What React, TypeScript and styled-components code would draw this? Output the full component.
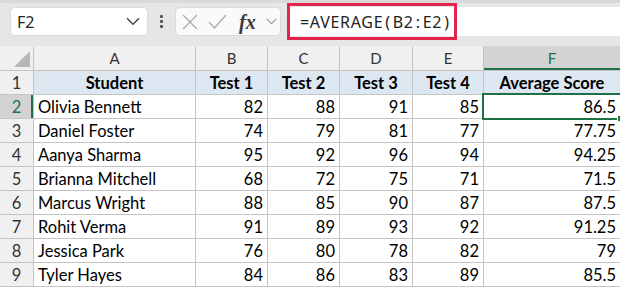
import React from "react";
import styled, { createGlobalStyle, css } from "styled-components";

const GlobalStyle = createGlobalStyle`
  html, body {
    margin: 0;
    padding: 0;
    background: #ffffff;
  }
  body {
    font-family: "Lato", "Liberation Sans", sans-serif;
  }
`;

const GREEN = "#1e7145";
const LINE = "#c4c4c4";

type Row = {
  name: string;
  scores: number[];
  avg: string;
};

const rows: Row[] = [
  { name: "Olivia Bennett", scores: [82, 88, 91, 85], avg: "86.5" },
  { name: "Daniel Foster", scores: [74, 79, 81, 77], avg: "77.75" },
  { name: "Aanya Sharma", scores: [95, 92, 96, 94], avg: "94.25" },
  { name: "Brianna Mitchell", scores: [68, 72, 75, 71], avg: "71.5" },
  { name: "Marcus Wright", scores: [88, 85, 90, 87], avg: "87.5" },
  { name: "Rohit Verma", scores: [91, 89, 93, 92], avg: "91.25" },
  { name: "Jessica Park", scores: [76, 80, 78, 82], avg: "79" },
  { name: "Tyler Hayes", scores: [84, 86, 83, 89], avg: "85.5" },
];

const columns = ["A", "B", "C", "D", "E", "F"];
const headers = ["Student", "Test 1", "Test 2", "Test 3", "Test 4", "Average Score"];

const Page = styled.div`
  width: 620px;
  height: 288px;
  overflow: hidden;
  background: #ffffff;
`;

/* ---------- formula toolbar ---------- */

const Toolbar = styled.div`
  height: 43px;
  background: #e6e6e6;
  border-top: 3px solid #d9d9d9;
  display: flex;
  align-items: center;
  padding-left: 10px;
  box-sizing: content-box;
`;

const NameBox = styled.div`
  width: 138px;
  height: 29px;
  box-sizing: border-box;
  background: #ffffff;
  border: 1px solid #dadada;
  border-radius: 5px;
  display: flex;
  align-items: center;
  justify-content: space-between;
  padding: 0 7px 0 6px;
  font-family: "Noto Sans", "Liberation Sans", sans-serif;
  font-size: 16px;
  color: #222;
  margin-top: -6px;
`;

const Grip = styled.div`
  width: 27px;
  display: flex;
  flex-direction: column;
  align-items: center;
  gap: 2px;
  margin-top: -6px;

  span {
    width: 3px;
    height: 3px;
    background: #555;
    border-radius: 1px;
  }
`;

const FormulaTools = styled.div`
  width: 106px;
  height: 29px;
  box-sizing: border-box;
  background: #fafafa;
  border: 1px solid #dadada;
  border-radius: 5px;
  display: flex;
  align-items: center;
  padding-left: 6px;
  gap: 10px;
  margin-top: -6px;
`;

const Fx = styled.span`
  font-family: "Liberation Serif", "DejaVu Serif", serif;
  font-style: italic;
  font-weight: 700;
  font-size: 20px;
  color: #3a3a3a;
  margin-left: 2px;
  line-height: 1;
`;

const FormulaBar = styled.div`
  flex: 1;
  height: 29px;
  margin-left: 6px;
  margin-top: -6px;
  background: #ffffff;
  display: flex;
  align-items: center;
`;

const Highlight = styled.div`
  width: 170px;
  height: 37px;
  box-sizing: border-box;
  border: 3px solid #e3244f;
  display: flex;
  align-items: center;
  padding-left: 10px;
  font-family: "Noto Sans", "Liberation Sans", sans-serif;
  font-size: 16px;
  letter-spacing: 0.7px;
  color: #222;
`;

const Punct = styled.span`
  margin: 0 2px;
`;

/* ---------- grid ---------- */

const Sheet = styled.div`
  display: grid;
  grid-template-columns: 33px 161px 71px 71px 72px 70px 1fr;
  grid-auto-rows: 23px;
  grid-template-rows: 24px;
  gap: 1px;
  background: ${LINE};
  border-bottom: 1px solid ${LINE};
`;

const HeaderCell = styled.div<{ $selected?: boolean }>`
  background: #f0f0f0;
  display: flex;
  align-items: center;
  justify-content: center;
  font-family: "Lato", "Liberation Sans", sans-serif;
  font-size: 15px;
  color: #333;
  position: relative;
  ${(p) =>
    p.$selected &&
    css`
      background: #d3d3d3;
      color: ${GREEN};
    `}
`;

const ColHeader = styled(HeaderCell)`
  ${(p) =>
    p.$selected &&
    css`
      box-shadow: inset 0 -2px 0 ${GREEN};
    `}
`;

const RowHeader = styled(HeaderCell)`
  font-size: 16.5px;
  ${(p) =>
    p.$selected &&
    css`
      box-shadow: inset -2px 0 0 ${GREEN};
    `}
`;

const Corner = styled(HeaderCell)`
  justify-content: flex-end;
  align-items: flex-end;
  padding: 0 3px 3px 0;

  svg {
    display: block;
  }
`;

const Cell = styled.div<{ $align?: "left" | "right" | "center"; $head?: boolean; $active?: boolean }>`
  background: ${(p) => (p.$head ? "#dde7f1" : "#ffffff")};
  display: flex;
  align-items: center;
  justify-content: ${(p) =>
    p.$align === "right" ? "flex-end" : p.$align === "center" ? "center" : "flex-start"};
  padding: 0 4px;
  font-family: "Lato", "Liberation Sans", sans-serif;
  font-size: 16.5px;
  font-weight: ${(p) => (p.$head ? 700 : 400)};
  color: #000;
  white-space: nowrap;
  overflow: visible;
  position: relative;
  ${(p) =>
    p.$active &&
    css`
      outline: 2px solid ${GREEN};
      outline-offset: 0px;
      z-index: 1;
    `}
`;

const FillHandle = styled.span`
  position: absolute;
  right: -4px;
  bottom: -4px;
  width: 5px;
  height: 5px;
  background: ${GREEN};
  border: 1px solid #fff;
`;

const Chevron = ({ size = 14, color = "#444" }: { size?: number; color?: string }) => (
  <svg width={size} height={size * 0.6} viewBox="0 0 14 8" fill="none">
    <path d="M1 1l6 6 6-6" stroke={color} strokeWidth="1.4" />
  </svg>
);

export default function App() {
  return (
    <Page>
      <GlobalStyle />
      <Toolbar>
        <NameBox>
          <span>F2</span>
          <Chevron />
        </NameBox>
        <Grip>
          <span />
          <span />
          <span />
        </Grip>
        <FormulaTools>
          <svg width="16" height="16" viewBox="0 0 16 16">
            <path d="M1 1l14 14M15 1L1 15" stroke="#ababab" strokeWidth="1.3" />
          </svg>
          <svg width="19" height="15" viewBox="0 0 19 15">
            <path d="M1 8l5.5 6L18 1" stroke="#ababab" strokeWidth="1.3" fill="none" />
          </svg>
          <Fx>fx</Fx>
          <Chevron size={11} color="#999" />
        </FormulaTools>
        <FormulaBar>
          <Highlight>
            =AVERAGE<Punct>(</Punct>B2<Punct>:</Punct>E2<Punct>)</Punct>
          </Highlight>
        </FormulaBar>
      </Toolbar>

      <Sheet>
        <Corner>
          <svg width="16" height="16" viewBox="0 0 16 16">
            <path d="M16 0V16H0Z" fill="#b7b7b7" />
          </svg>
        </Corner>
        {columns.map((c) => (
          <ColHeader key={c} $selected={c === "F"}>
            {c}
          </ColHeader>
        ))}

        <RowHeader>1</RowHeader>
        {headers.map((h) => (
          <Cell key={h} $head $align="center">
            {h}
          </Cell>
        ))}

        {rows.map((r, i) => (
          <React.Fragment key={r.name}>
            <RowHeader $selected={i === 0}>{i + 2}</RowHeader>
            <Cell>{r.name}</Cell>
            {r.scores.map((s, j) => (
              <Cell key={j} $align="right">
                {s}
              </Cell>
            ))}
            <Cell $align="right" $active={i === 0}>
              {r.avg}
              {i === 0 && <FillHandle />}
            </Cell>
          </React.Fragment>
        ))}
      </Sheet>
    </Page>
  );
}
